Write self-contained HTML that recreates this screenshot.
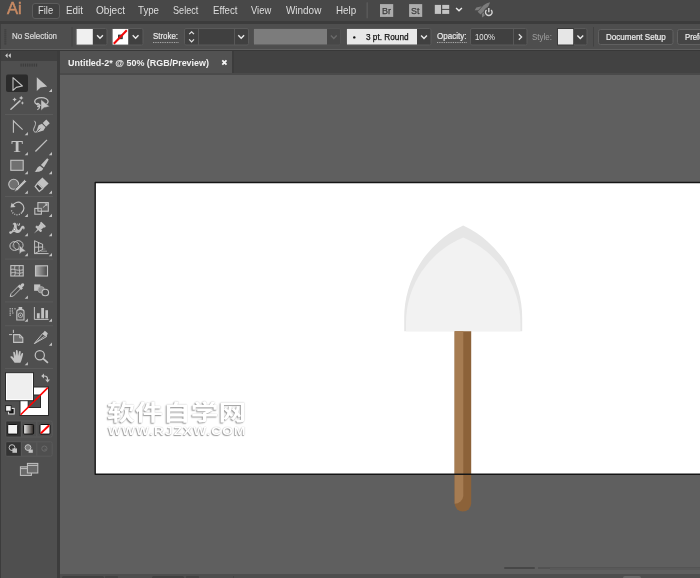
<!DOCTYPE html>
<html><head><meta charset="utf-8">
<style>
*{box-sizing:border-box;margin:0;padding:0}
html,body{width:700px;height:578px;overflow:hidden;background:#5f5f5f;font-family:"Liberation Sans","Noto Sans CJK SC",sans-serif;}
#app{position:relative;width:700px;height:578px;overflow:hidden;background:#5f5f5f}
.abs{position:absolute}
.st{position:absolute;white-space:nowrap;line-height:1.2;transform-origin:0 0;}
.wm{position:absolute;white-space:nowrap;color:#fff;transform-origin:0 0;font-weight:bold}
</style></head><body>
<div id="app">
<div class="abs" style="left:0;top:0;width:700px;height:22px;background:#484848"></div>
<div class="abs" style="left:0;top:21.4px;width:700px;height:2.2px;background:#3c3c3c"></div>
<div class="abs" style="left:0;top:23.6px;width:700px;height:25.9px;background:#4e4e4e"></div><div class="abs" style="left:0;top:23.6px;width:1.2px;height:25.9px;background:#404040"></div>
<div class="abs" style="left:0;top:49.5px;width:700px;height:1.7px;background:#383838"></div>
<div class="abs" style="left:6.5px;top:-1.5px;font-size:16.9px;line-height:20px;color:#c98b64;letter-spacing:0px;font-weight:normal;-webkit-text-stroke:0.5px #c98b64;transform:scaleX(0.98);transform-origin:0 0">Ai</div>
<div class="abs" style="left:32px;top:3px;width:27.6px;height:15.6px;background:#404040;border:1px solid #5c5c5c;border-radius:3px"></div>
<!-- tab bar -->
<div class="abs" style="left:60px;top:51px;width:640px;height:22.4px;background:#424242"></div>
<div class="abs" style="left:60px;top:51px;width:173.5px;height:22.4px;background:#3c3c3c"></div>
<div class="abs" style="left:60px;top:51px;width:172.4px;height:22.4px;background:#525252"></div>
<div class="abs" style="left:60px;top:73.4px;width:640px;height:1.9px;background:#4a4a4a"></div>
<!-- toolbar -->
<div class="abs" style="left:0;top:51px;width:59px;height:527px;background:#4f4f4f"></div>
<div class="abs" style="left:0;top:51px;width:58px;height:9.6px;background:#404040"></div>
<div class="abs" style="left:0;top:51px;width:1px;height:527px;background:#3c3c3c"></div>
<div class="abs" style="left:57.2px;top:51px;width:2.8px;height:527px;background:#3c3c3c"></div>
<svg class="abs" style="left:0;top:0" width="60" height="578" viewBox="0 0 60 578">
<g fill="#3c3c3c"><rect x="20.5" y="63.6" width="1.2" height="3"/><rect x="22.7" y="63.6" width="1.2" height="3"/><rect x="24.9" y="63.6" width="1.2" height="3"/><rect x="27.1" y="63.6" width="1.2" height="3"/><rect x="29.3" y="63.6" width="1.2" height="3"/><rect x="31.5" y="63.6" width="1.2" height="3"/><rect x="33.7" y="63.6" width="1.2" height="3"/><rect x="35.9" y="63.6" width="1.2" height="3"/></g>
<path d="M7.6,53.2 L5.2,55.6 L7.6,58 Z M10.8,53.2 L8.4,55.6 L10.8,58 Z" fill="#d0d0d0"/>
<rect x="6" y="74.5" width="22" height="17.5" rx="2" fill="#2b2b2b"/>
<path d="M13,77.6 L13,90.4 L16.3,87.4 L22.4,86 Z" fill="none" stroke="#c2c2c2" stroke-width="1.1" stroke-linejoin="round"/>
<path d="M36.8,77.3 L36.8,91 L40.6,87.6 L47.2,86.4 Z" fill="#c2c2c2"/>
<path d="M52.0,88.8 L52.0,92.0 L48.8,92.0 Z" fill="#c2c2c2"/>
<path d="M10.9,109.2 L20,100.9" stroke="#c2c2c2" stroke-width="1.5" stroke-linecap="round"/>
<polygon points="14.60,97.40 15.37,98.83 16.80,99.60 15.37,100.37 14.60,101.80 13.83,100.37 12.40,99.60 13.83,98.83" fill="#c2c2c2"/>
<polygon points="21.20,95.70 21.97,97.13 23.40,97.90 21.97,98.67 21.20,100.10 20.43,98.67 19.00,97.90 20.43,97.13" fill="#c2c2c2"/>
<polygon points="22.40,101.30 22.99,102.41 24.10,103.00 22.99,103.59 22.40,104.70 21.80,103.59 20.70,103.00 21.80,102.41" fill="#c2c2c2"/>
<ellipse cx="41.4" cy="101.5" rx="6.7" ry="3.9" fill="none" stroke="#c2c2c2" stroke-width="1.3"/>
<path d="M36.2,104.2 C38.2,102.6 40,104 39.2,105.8 C38.6,107.2 37.2,106.6 37.6,105.6 M39.3,105.5 C39.8,107.5 39,109 37.3,109.6" fill="none" stroke="#c2c2c2" stroke-width="1.2"/>
<path d="M41,99.6 L41,110.4 L44,107.7 L49.6,106.6 Z" fill="#c2c2c2" stroke="#4f4f4f" stroke-width="0.4"/>
<rect x="5" y="114" width="48" height="1" fill="#5a5a5a"/>
<path d="M13.4,132.8 L13.4,120.8 L22.6,129.7" fill="none" stroke="#c2c2c2" stroke-width="1.1"/>
<path d="M27.9,132 L27.9,135.2 L24.7,135.2 Z" fill="#c2c2c2"/>
<g transform="translate(36,132.8) rotate(-43.5)"><path d="M0,0 L7,-3.6 L10.6,-2.5 L10.6,2.5 L7,3.6 Z" fill="#c2c2c2"/><path d="M0.5,0 L6,0" stroke="#4f4f4f" stroke-width="0.8"/><rect x="11.6" y="-2.5" width="5" height="5" fill="#c2c2c2"/></g>
<path d="M34.4,120.8 C37.4,124 33.4,127.4 33.6,130.2 C33.8,132.2 35.6,132.6 36.8,131.6" fill="none" stroke="#c2c2c2" stroke-width="1"/>
<text x="17.1" y="151.9" font-family="Liberation Serif, serif" font-weight="bold" font-size="17.6" text-anchor="middle" fill="#c2c2c2" style="filter:grayscale(1)">T</text>
<path d="M27.9,152 L27.9,155.2 L24.7,155.2 Z" fill="#c2c2c2"/>
<path d="M35.4,151.5 L47,139.9" stroke="#c2c2c2" stroke-width="1.3"/>
<path d="M52.0,152 L52.0,155.2 L48.8,155.2 Z" fill="#c2c2c2"/>
<rect x="10.8" y="160.3" width="12.4" height="10" fill="#707070" stroke="#c2c2c2" stroke-width="1.1"/>
<path d="M27.9,171 L27.9,174.2 L24.7,174.2 Z" fill="#c2c2c2"/>
<path d="M47.2,158.3 L48.7,159.6 L43.9,167.4 L40.9,165 Z" fill="#c2c2c2"/><path d="M40,166 L43.2,168.5 C42.6,171.4 38,172.2 34.6,171.8 C36.8,170.6 36.4,167.2 40,166 Z" fill="#c2c2c2"/>
<path d="M52.0,171 L52.0,174.2 L48.8,174.2 Z" fill="#c2c2c2"/>
<circle cx="13.7" cy="184.3" r="5" fill="#707070" stroke="#c2c2c2" stroke-width="1.1"/>
<path d="M24.6,179.6 L26.6,181.6 L17.8,190.4 L14.3,191.7 L15.6,188.4 Z" fill="#c2c2c2" stroke="#4f4f4f" stroke-width="0.8"/>
<path d="M27.9,190.6 L27.9,193.79999999999998 L24.7,193.79999999999998 Z" fill="#c2c2c2"/>
<path d="M42.4,177.5 L48.6,183.6 L43.4,188.4 L37.2,182.6 Z" fill="#c2c2c2"/><path d="M37.4,183.4 L42.8,188.6 L39.2,191.4 L35.2,186.4 Z" fill="#444" stroke="#c2c2c2" stroke-width="1.3"/>
<path d="M52.0,190.6 L52.0,193.79999999999998 L48.8,193.79999999999998 Z" fill="#c2c2c2"/>
<rect x="5" y="196" width="48" height="1" fill="#5a5a5a"/>
<path d="M12.5,206 A5.9,5.9 0 1 1 21.6,212.8" fill="none" stroke="#c2c2c2" stroke-width="1.2"/>
<path d="M21.6,212.8 A5.9,5.9 0 0 1 11.4,210" fill="none" stroke="#c2c2c2" stroke-width="1.3" stroke-dasharray="1,1.3"/>
<path d="M10.5,207.6 L11.6,202.8 L15.6,207 Z" fill="#c2c2c2"/>
<path d="M27.9,213.8 L27.9,217.0 L24.7,217.0 Z" fill="#c2c2c2"/>
<rect x="34.8" y="208.4" width="6.6" height="5.8" fill="#4f4f4f" stroke="#c2c2c2" stroke-width="1.1"/>
<rect x="37.9" y="202.6" width="10.4" height="8.6" fill="#808080" fill-opacity="0.35" stroke="#c2c2c2" stroke-width="1.1"/>
<path d="M42.8,207.7 L46.4,204.6" stroke="#c2c2c2" stroke-width="1"/><path d="M44.6,203.6 L47.6,203.4 L47.2,206.4 Z" fill="#c2c2c2"/>
<path d="M52.0,213.8 L52.0,217.0 L48.8,217.0 Z" fill="#c2c2c2"/>
<path d="M10.4,232.8 C12.5,230.5 13.4,228.6 14,226.6 C14.4,225 13.4,223.8 12.4,224.6 C13.2,222.4 16,222 16.6,224.6 C17,226.4 16.4,228.6 17.6,229.6 C19.2,230.8 20.2,228.6 21,227 C22,225.2 24.2,225.6 24.6,227.6 C24.8,228.8 24.2,229.6 23.6,229.8 C23.8,228.6 22.8,228 22.2,229 C21,231.4 19.6,233.4 17,233 C15.4,232.8 14.8,231.6 14,231.8 C13,232 12,233.4 10.4,232.8 Z" fill="#c2c2c2"/>
<circle cx="14.4" cy="229.3" r="1.1" fill="#ffffff" stroke="#4f4f4f" stroke-width="0.5"/><circle cx="10.6" cy="232.6" r="1.4" fill="#c2c2c2"/>
<path d="M17.6,223.6 L18.4,226 M19.6,223.2 L19.4,225.4" stroke="#c2c2c2" stroke-width="1"/>
<path d="M27.9,233 L27.9,236.2 L24.7,236.2 Z" fill="#c2c2c2"/>
<g transform="translate(34,233.6) rotate(-45)"><path d="M0,0 L6,-0.7 L6,0.7 Z" fill="#c2c2c2"/><rect x="5.6" y="-3.8" width="2.2" height="7.6" rx="0.6" fill="#c2c2c2"/><path d="M7.6,-2.2 L12,-2.6 L12,2.6 L7.6,2.2 Z" fill="#c2c2c2"/><rect x="11.6" y="-3.4" width="2" height="6.8" rx="0.8" fill="#c2c2c2"/></g>
<path d="M52.0,233 L52.0,236.2 L48.8,236.2 Z" fill="#c2c2c2"/>
<ellipse cx="14.6" cy="246" rx="4.7" ry="4.4" fill="none" stroke="#c2c2c2" stroke-width="1"/>
<ellipse cx="18.2" cy="245.2" rx="4.9" ry="4.5" fill="none" stroke="#c2c2c2" stroke-width="1"/>
<rect x="12.4" y="244.6" width="2" height="2.4" fill="#8a8a8a"/>
<path d="M19.3,245.2 L19.3,254.2 L21.7,252 L25.9,251.2 Z" fill="#c2c2c2" stroke="#4f4f4f" stroke-width="0.5"/>
<path d="M27.9,253 L27.9,256.2 L24.7,256.2 Z" fill="#c2c2c2"/>
<path d="M34.6,240.6 L34.6,253.8 M38.6,242.4 L38.6,251.8 M42.6,244.2 L42.6,249.6 M34.6,240.8 L42.8,244.4 M34.6,247.2 L42.8,247 M34.6,253.6 L42.8,249.4" fill="none" stroke="#c2c2c2" stroke-width="1"/>
<path d="M34.6,253.6 L48.6,253.6" stroke="#c2c2c2" stroke-width="1"/><path d="M40.5,251.2 L47,251.2" stroke="#9a9a9a" stroke-width="1"/><path d="M42.5,249 L45.4,249" stroke="#808080" stroke-width="1"/><path d="M43.5,247 L44.4,247" stroke="#6c6c6c" stroke-width="1"/>
<path d="M52.0,253 L52.0,256.2 L48.8,256.2 Z" fill="#c2c2c2"/>
<rect x="5" y="258.6" width="48" height="1" fill="#5a5a5a"/>
<rect x="10.8" y="265.6" width="12.4" height="10.4" fill="#5a5a5a" stroke="#c2c2c2" stroke-width="1.1"/>
<path d="M10.8,269.6 C14,268 16,271.5 23.2,269.8 M10.8,273 C14,271.4 18,274.6 23.2,272.6 M15,265.6 C13.6,269 16.6,272 14.6,276 M19.4,265.6 C18.2,269 21,272.4 19.2,276" fill="none" stroke="#c2c2c2" stroke-width="0.9"/>
<defs><linearGradient id="gr1" x1="0" x2="1" y1="0" y2="0"><stop offset="0" stop-color="#b0b0b0"/><stop offset="1" stop-color="#4a4a4a"/></linearGradient></defs>
<rect x="35.5" y="265.8" width="12" height="10.2" fill="url(#gr1)" stroke="#c2c2c2" stroke-width="1.1"/>
<path d="M10.2,296.6 L11,293.6 L18.4,286.2 L20.8,288.6 L13.4,296 Z" fill="#4f4f4f" stroke="#c2c2c2" stroke-width="1"/>
<path d="M17.6,286.4 L19.4,284.6 L20.4,285.6 C21,283.6 22.8,282.8 23.8,283.8 C24.8,284.8 24,286.6 22,287.2 L23,288.2 L21.2,290 Z" fill="#c2c2c2"/>
<path d="M27.9,295.6 L27.9,298.8 L24.7,298.8 Z" fill="#c2c2c2"/>
<rect x="34.1" y="284.4" width="6.2" height="6.4" fill="#c2c2c2"/>
<circle cx="41.2" cy="289.8" r="3.2" fill="#8c8c8c" stroke="#b0b0b0" stroke-width="0.8"/>
<circle cx="45.3" cy="292.5" r="3.3" fill="#4f4f4f" stroke="#c2c2c2" stroke-width="1.1"/>
<rect x="5" y="301.4" width="48" height="1" fill="#5a5a5a"/>
<g fill="#c2c2c2"><rect x="9.6" y="308.2" width="1.2" height="1.2"/><rect x="11.8" y="308.2" width="1.2" height="1.2"/><rect x="14.4" y="308.2" width="1.2" height="1.2"/><rect x="9.6" y="310.4" width="1.2" height="1.2"/><rect x="11.8" y="310.4" width="1.2" height="1.2"/><rect x="9.6" y="312.6" width="1.2" height="1.2"/><rect x="9.6" y="314.6" width="1.2" height="1.2"/><rect x="12.2" y="312.4" width="1.2" height="1.2"/></g>
<rect x="18.6" y="307" width="3.6" height="2" fill="#c2c2c2"/><path d="M16.8,320 L16.8,311.6 C16.8,310 18,309.4 20.4,309.4 C22.8,309.4 24,310 24,311.6 L24,320 Z" fill="#5a5a5a" stroke="#c2c2c2" stroke-width="1.1"/>
<circle cx="20.4" cy="315.2" r="2.2" fill="#4f4f4f" stroke="#c2c2c2" stroke-width="0.9"/><circle cx="20.4" cy="315.2" r="0.8" fill="#c2c2c2"/>
<path d="M27.9,318.6 L27.9,321.8 L24.7,321.8 Z" fill="#c2c2c2"/>
<path d="M34.4,307 L34.4,319.4 L48.6,319.4" fill="none" stroke="#c2c2c2" stroke-width="1"/>
<rect x="36.9" y="313.2" width="2.8" height="5.2" fill="#c2c2c2"/><rect x="41.2" y="308" width="2.8" height="10.4" fill="#c2c2c2"/><rect x="45.4" y="310.2" width="2.6" height="8.2" fill="#c2c2c2"/>
<path d="M52.0,318.6 L52.0,321.8 L48.8,321.8 Z" fill="#c2c2c2"/>
<rect x="5" y="325.2" width="48" height="1" fill="#5a5a5a"/>
<path d="M9,334.6 L12.2,334.6 M13.4,329.8 L13.4,333" stroke="#c2c2c2" stroke-width="1"/>
<path d="M13.6,334.6 L19.6,334.6 L22.8,337.8 L22.8,342.4 L13.6,342.4 Z" fill="#6e6e6e" stroke="#c2c2c2" stroke-width="1.1"/><path d="M19.6,334.6 L19.6,337.8 L22.8,337.8" fill="none" stroke="#c2c2c2" stroke-width="0.8"/>
<path d="M34.3,343.6 L42.6,333.6 L46.6,336.6 Z" fill="#4f4f4f" stroke="#c2c2c2" stroke-width="1"/><path d="M42.4,333.8 L44.8,330.8 L47.8,333.2 L46.4,336.8 Z" fill="#c2c2c2"/><path d="M34.6,343.4 L44.6,336" stroke="#c2c2c2" stroke-width="0.8"/>
<path d="M52.0,342.6 L52.0,345.8 L48.8,345.8 Z" fill="#c2c2c2"/>
<path d="M14.6,362.8 C13.6,361 11.8,358.6 10.4,357.2 C10.2,356.2 11.4,355.8 12.4,356.6 L14,358.2 L13.2,352.6 C13.1,351.5 14.6,351.3 14.9,352.4 L15.9,356 L15.9,351 C15.9,349.8 17.6,349.8 17.7,351 L18,356 L19,351.6 C19.3,350.5 20.8,350.8 20.7,352 L20.2,356.6 L21.6,353.6 C22.1,352.6 23.4,353.2 23.1,354.2 C22.4,357 21.8,360 20.4,362.8 Z" fill="#c2c2c2"/>
<path d="M27.9,362 L27.9,365.2 L24.7,365.2 Z" fill="#c2c2c2"/>
<circle cx="39.8" cy="355.2" r="4.6" fill="none" stroke="#c2c2c2" stroke-width="1.2"/><path d="M43.2,358.6 L47.4,362.4" stroke="#c2c2c2" stroke-width="1.8" stroke-linecap="round"/>
<rect x="5" y="368" width="48" height="1" fill="#5a5a5a"/>
<rect x="20" y="387" width="28.5" height="28.5" fill="#ffffff" stroke="#2a2a2a" stroke-width="1"/>
<rect x="28.2" y="395" width="12.3" height="12.5" fill="#4f4f4f" stroke="#2a2a2a" stroke-width="1"/>
<path d="M20.6,414.8 L47.9,387.6" stroke="#ff0000" stroke-width="1.6"/>
<rect x="5.5" y="372.7" width="28" height="28" fill="#ffffff" stroke="#2a2a2a" stroke-width="1"/>
<rect x="7" y="374.2" width="25" height="25" fill="#efefef"/>
<path d="M43.4,376 C46.4,375.6 47.8,377 47.6,380.2" fill="none" stroke="#c2c2c2" stroke-width="1.1"/><path d="M41.2,376 L44,373.6 L44,378.4 Z" fill="#c2c2c2"/><path d="M45.2,379.6 L50,379.6 L47.6,382.6 Z" fill="#c2c2c2"/>
<rect x="8.6" y="408.4" width="5.6" height="5.6" fill="#111" stroke="#e8e8e8" stroke-width="1"/>
<rect x="5.6" y="405.6" width="5.6" height="5.6" fill="#f4f4f4" stroke="#222" stroke-width="1"/>
<rect x="5.8" y="421" width="46.4" height="16" rx="1.5" fill="#4f4f4f" stroke="#5a5a5a" stroke-width="1"/>
<rect x="6.3" y="421.5" width="14.6" height="15" fill="#333333"/>
<path d="M21.4,421.5 L21.4,436.5 M36.8,421.5 L36.8,436.5" stroke="#5a5a5a" stroke-width="1"/>
<rect x="7.7" y="424.5" width="10" height="9.6" rx="1" fill="#f4f4f4" stroke="#111" stroke-width="1"/>
<defs><linearGradient id="gr2" x1="0" x2="1"><stop offset="0" stop-color="#f0f0f0"/><stop offset="1" stop-color="#2a2420"/></linearGradient></defs>
<rect x="23.6" y="424.5" width="10" height="9.6" rx="1" fill="url(#gr2)" stroke="#111" stroke-width="1"/>
<rect x="40" y="424.5" width="10" height="9.6" rx="1" fill="#ffffff" stroke="#111" stroke-width="1"/><path d="M40.8,433.4 L49.2,425.2" stroke="#ff0000" stroke-width="2"/>
<rect x="5.8" y="441.8" width="46.4" height="14.4" rx="1.5" fill="#4f4f4f" stroke="#5a5a5a" stroke-width="1"/>
<rect x="6.3" y="442.3" width="14.6" height="13.4" fill="#333333"/>
<path d="M21.4,442.3 L21.4,455.7 M36.8,442.3 L36.8,455.7" stroke="#5a5a5a" stroke-width="1"/>
<circle cx="12" cy="447.6" r="2.9" fill="#333" stroke="#c2c2c2" stroke-width="1"/><rect x="12.4" y="448.4" width="4.6" height="4.4" fill="#c2c2c2"/>
<circle cx="28" cy="447.6" r="2.9" fill="#777" stroke="#c2c2c2" stroke-width="1"/><rect x="28.6" y="449.6" width="4.2" height="3.2" fill="#c2c2c2"/>
<circle cx="44.4" cy="448.6" r="2.6" fill="none" stroke="#6a6a6a" stroke-width="1"/><rect x="44.4" y="448.6" width="2.2" height="2.2" fill="#626262"/>
<rect x="20.4" y="466.8" width="11" height="8.6" fill="#6a6a6a" stroke="#c2c2c2" stroke-width="1"/><path d="M20.4,468.6 L31.4,468.6" stroke="#c2c2c2" stroke-width="1"/>
<rect x="27.4" y="463.4" width="10.4" height="9.6" fill="#6a6a6a" stroke="#c2c2c2" stroke-width="1"/><path d="M27.4,465.4 L37.8,465.4" stroke="#c2c2c2" stroke-width="1"/>
</svg>
<svg class="abs" style="left:0;top:0" width="700" height="80" viewBox="0 0 700 80">
<g fill="#3a3a3a"><rect x="4.3" y="29.4" width="2" height="1"/><rect x="4.3" y="31.4" width="2" height="1"/><rect x="4.3" y="33.4" width="2" height="1"/><rect x="4.3" y="35.4" width="2" height="1"/><rect x="4.3" y="37.4" width="2" height="1"/><rect x="4.3" y="39.4" width="2" height="1"/><rect x="4.3" y="41.4" width="2" height="1"/><rect x="4.3" y="43.4" width="2" height="1"/></g>
<rect x="71.5" y="27" width="1" height="19.5" fill="#424242"/>
<rect x="76" y="28.5" width="31" height="16.5" rx="1.5" fill="#404040" stroke="#5a5a5a" stroke-width="1"/><path d="M97.1,35.3 L100,38.199999999999996 L102.9,35.3" fill="none" stroke="#eaeaea" stroke-width="1.4"/>
<rect x="76.6" y="29" width="16.2" height="15.6" fill="#f0f0f0"/>
<rect x="112" y="28.5" width="31" height="16.5" rx="1.5" fill="#404040" stroke="#5a5a5a" stroke-width="1"/><path d="M132.7,35.3 L135.6,38.199999999999996 L138.5,35.3" fill="none" stroke="#eaeaea" stroke-width="1.4"/>
<rect x="112.6" y="29" width="15.6" height="15.6" fill="#ffffff"/>
<rect x="118.6" y="35.1" width="3.6" height="3.6" fill="#666" stroke="#222" stroke-width="0.9"/>
<path d="M113.8,43.8 L126.8,30.2" stroke="#f00808" stroke-width="2"/>
<rect x="184.5" y="28.5" width="64" height="16.5" rx="1.5" fill="#404040" stroke="#5a5a5a" stroke-width="1"/>
<path d="M198.5,28.5 L198.5,45 M234.5,28.5 L234.5,45" stroke="#585858" stroke-width="1"/>
<path d="M189.2,34.2 L191.6,31.8 L194,34.2 M189.2,39.4 L191.6,41.8 L194,39.4" fill="none" stroke="#e0e0e0" stroke-width="1.2"/>
<path d="M238.29999999999998,35.3 L241.2,38.199999999999996 L244.1,35.3" fill="none" stroke="#eaeaea" stroke-width="1.4"/>
<rect x="253.5" y="28.5" width="87" height="16.5" rx="1.5" fill="#474747" stroke="#525252" stroke-width="1"/>
<rect x="254" y="29" width="73" height="15.5" fill="#7c7c7c"/>
<path d="M330.90000000000003,35.5 L333.8,38.4 L336.7,35.5" fill="none" stroke="#6a6a6a" stroke-width="1.4"/>
<rect x="346.5" y="28.5" width="84.5" height="16.5" rx="1.5" fill="#404040" stroke="#5a5a5a" stroke-width="1"/>
<rect x="347" y="29" width="70" height="15.5" fill="#e8e8e8"/>
<circle cx="354.3" cy="37.4" r="1.2" fill="#111"/>
<path d="M421.1,35.5 L424,38.4 L426.9,35.5" fill="none" stroke="#eaeaea" stroke-width="1.4"/>
<rect x="470.5" y="28.5" width="56.5" height="16.5" rx="1.5" fill="#404040" stroke="#5a5a5a" stroke-width="1"/>
<path d="M513.5,28.5 L513.5,45" stroke="#585858" stroke-width="1"/>
<path d="M518.8,34.2 L521.6,37 L518.8,39.8" fill="none" stroke="#e0e0e0" stroke-width="1.3"/>
<rect x="557.5" y="28.5" width="16" height="16.5" fill="#e6e6e6" stroke="#3a3a3a" stroke-width="1"/>
<rect x="573.5" y="28.5" width="13.5" height="16.5" rx="1.5" fill="#404040" stroke="#5a5a5a" stroke-width="1"/><path d="M577.4,35.5 L580.3,38.4 L583.1999999999999,35.5" fill="none" stroke="#eaeaea" stroke-width="1.4"/>
<rect x="593" y="27" width="1" height="19.5" fill="#424242"/>
<rect x="598.5" y="29.5" width="74.5" height="15" rx="2" fill="#454545" stroke="#606060" stroke-width="1"/>
<rect x="677.5" y="29.5" width="40" height="15" rx="2" fill="#454545" stroke="#606060" stroke-width="1"/>
<rect x="366.5" y="2.3" width="1.4" height="16" fill="#5a5a5a"/>
<rect x="380" y="4.1" width="13.2" height="12.8" fill="#adadad"/><rect x="409.1" y="4.1" width="13.1" height="12.8" fill="#adadad"/>
<rect x="434.8" y="4.9" width="6.2" height="9" fill="#c4c4c4"/><rect x="442.2" y="4.9" width="7" height="4" fill="#c4c4c4"/><rect x="442.2" y="9.9" width="7" height="4" fill="#c4c4c4"/>
<path d="M456.1,7.9 L459,10.8 L461.9,7.9" fill="none" stroke="#eaeaea" stroke-width="1.4"/>
<g transform="translate(483.6,8.6) rotate(-45)" fill="#7c7c7c"><path d="M-6.4,-2 L2,-2.3 C5,-2 7.4,-1 9,0 C7.4,1 5,2 2,2.3 L-6.4,2 Z"/><path d="M-5,-2.6 L0.5,-2.9 L-4.4,-5.8 L-7.4,-5.2 Z"/><path d="M-5,2.6 L0.5,2.9 L-4.4,5.8 L-7.4,5.2 Z"/></g>
<circle cx="488.8" cy="12.2" r="5" fill="#484848"/><path d="M486.5,9.9 A3.3,3.3 0 1 0 491.1,9.9" fill="none" stroke="#d2d2d2" stroke-width="1.4"/><path d="M488.8,8 L488.8,12.2" stroke="#d2d2d2" stroke-width="1.4"/>
<path d="M222.3,60.4 L226.5,64.6 M226.5,60.4 L222.3,64.6" stroke="#f4f4f4" stroke-width="1.8"/>
</svg>
<div class="st" style="left:38px;top:4px;font-size:11px;color:#dedede;font-weight:normal;transform:scaleX(0.8571);">File</div><div class="st" style="left:66px;top:4px;font-size:11px;color:#dedede;font-weight:normal;transform:scaleX(0.8962);">Edit</div><div class="st" style="left:96px;top:4px;font-size:11px;color:#dedede;font-weight:normal;transform:scaleX(0.9120);">Object</div><div class="st" style="left:138px;top:4px;font-size:11px;color:#dedede;font-weight:normal;transform:scaleX(0.8802);">Type</div><div class="st" style="left:173.3px;top:4px;font-size:11px;color:#dedede;font-weight:normal;transform:scaleX(0.8274);">Select</div><div class="st" style="left:213.3px;top:4px;font-size:11px;color:#dedede;font-weight:normal;transform:scaleX(0.8770);">Effect</div><div class="st" style="left:251.3px;top:4px;font-size:11px;color:#dedede;font-weight:normal;transform:scaleX(0.8539);">View</div><div class="st" style="left:286.2px;top:4px;font-size:11px;color:#dedede;font-weight:normal;transform:scaleX(0.9022);">Window</div><div class="st" style="left:335.6px;top:4px;font-size:11px;color:#dedede;font-weight:normal;transform:scaleX(0.8928);">Help</div><div class="st" style="left:12px;top:30.8px;font-size:9px;color:#dcdcdc;font-weight:normal;transform:scaleX(0.8818);-webkit-text-stroke:0.2px #dcdcdc;">No Selection</div><div class="st" style="left:153px;top:32.4px;font-size:9px;color:#eaeaea;font-weight:normal;transform:scaleX(0.8767);border-bottom:1px dotted #bbb;line-height:9.6px;-webkit-text-stroke:0.2px #eaeaea;">Stroke:</div><div class="st" style="left:366px;top:32.3px;font-size:9px;color:#111;font-weight:normal;transform:scaleX(0.9152);-webkit-text-stroke:0.25px #111;">3 pt. Round</div><div class="st" style="left:437px;top:32.2px;font-size:9px;color:#eaeaea;font-weight:normal;transform:scaleX(0.8965);border-bottom:1px dotted #bbb;line-height:9.8px;-webkit-text-stroke:0.2px #eaeaea;">Opacity:</div><div class="st" style="left:475px;top:32.2px;font-size:9px;color:#e6e6e6;font-weight:normal;transform:scaleX(0.8684);">100%</div><div class="st" style="left:532px;top:32.2px;font-size:9px;color:#a0a0a0;font-weight:normal;transform:scaleX(0.8883);">Style:</div><div class="st" style="left:606px;top:32.4px;font-size:9px;color:#efefef;font-weight:normal;transform:scaleX(0.8919);-webkit-text-stroke:0.2px #efefef;">Document Setup</div><div class="st" style="left:685.3px;top:32.4px;font-size:9px;color:#efefef;font-weight:normal;transform:scaleX(0.8654);-webkit-text-stroke:0.2px #efefef;">Preferences</div><div class="st" style="left:67.7px;top:57.2px;font-size:9.5px;color:#f2f2f2;font-weight:bold;transform:scaleX(0.9420);">Untitled-2* @ 50% (RGB/Preview)</div><div class="st" style="left:382px;top:4.9px;font-size:9.5px;color:#3a3a3a;font-weight:normal;transform:scaleX(0.9474);-webkit-text-stroke:0.25px #3a3a3a;">Br</div><div class="st" style="left:411.4px;top:4.9px;font-size:9.5px;color:#3a3a3a;font-weight:normal;transform:scaleX(0.9350);-webkit-text-stroke:0.25px #3a3a3a;">St</div>
<!-- artboard -->
<div class="abs" style="left:95px;top:182px;width:610px;height:293px;background:#fff"></div>
<!-- watermark -->
<div class="wm" style="left:107px;top:398.2px;font-size:22px;line-height:30px;transform:scaleX(1.2680);text-shadow:-0.8px 1px 1.2px #999, 0 0 1px #bbb;">软件自学网</div>
<div class="wm" style="left:108px;top:424px;font-size:10.5px;line-height:14px;letter-spacing:0.8px;transform:scaleX(1.3058);text-shadow:-0.6px 0.9px 0.9px #999, 0 0 1px #bbb;">WWW.RJZXW.COM</div>
<!-- shovel -->
<svg class="abs" style="left:0;top:0" width="700" height="578" viewBox="0 0 700 578">
  <path d="M404.2,331.2 L404.2,318.5 A102,102 0 0 1 463.2,225.6 A102,102 0 0 1 522.2,318.5 L522.2,331.2 Z" fill="#e6e6e6"/>
  <path d="M406,331.2 L406,323 A93,93 0 0 1 463.2,237.4 A93,93 0 0 1 520.4,323 L520.4,331.2 Z" fill="#f2f2f2"/>
  <path d="M454.6,331.2 L471.2,331.2 L471.2,503.3 A8.3,8.3 0 0 1 454.6,503.3 Z" fill="#8c6239"/>
  <path d="M454.6,331.2 L463.3,331.2 L463.3,496 A8.7,8.7 0 0 1 454.6,503.8 Z" fill="#a67c52"/>
  <rect x="95.2" y="182.5" width="620" height="291.8" fill="none" stroke="#161616" stroke-width="1.4" stroke-linejoin="round"/>
</svg>
<!-- bottom -->
<div class="abs" style="left:60px;top:574.2px;width:640px;height:4px;background:#4e4e4e"></div>
<div class="abs" style="left:62.4px;top:575.6px;width:41.4px;height:3px;background:#404040;border-radius:1.5px 1.5px 0 0"></div>
<div class="abs" style="left:105px;top:575.6px;width:13.3px;height:3px;background:#424242;border-radius:1px 1px 0 0"></div>
<div class="abs" style="left:152.3px;top:575.6px;width:32.2px;height:3px;background:#404040;border-radius:1.5px 1.5px 0 0"></div>
<div class="abs" style="left:186.3px;top:575.6px;width:12.7px;height:3px;background:#424242;border-radius:1px 1px 0 0"></div>
<div class="abs" style="left:233px;top:575.6px;width:1px;height:3px;background:#444"></div>
<div class="abs" style="left:549.5px;top:566.6px;width:151px;height:3px;background:#595959"></div>
<div class="abs" style="left:504px;top:567px;width:31px;height:1.6px;background:#474747;border-radius:1px"></div>
<div class="abs" style="left:537.5px;top:567px;width:12px;height:1.6px;background:#525252"></div>
<div class="abs" style="left:549.5px;top:566.6px;width:151px;height:1px;background:#545454"></div>
<div class="abs" style="left:623px;top:575.8px;width:18.4px;height:3px;background:#686868;border-radius:2px 2px 0 0"></div>
</div>
</body></html>
